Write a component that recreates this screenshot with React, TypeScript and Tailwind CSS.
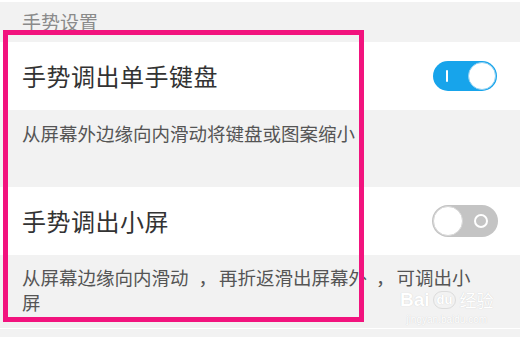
import React from 'react';

const font = { fontFamily: '"Noto Sans CJK SC", "Noto Sans", sans-serif' };

const ToggleOn = () => (
  <div className="relative w-[64px] h-[30px] rounded-full bg-[#17a4eb] flex items-center">
    <div className="ml-[13px] w-[2px] h-[12px] bg-white rounded-sm" />
    <div className="absolute right-[1px] top-[1px] w-[28px] h-[28px] rounded-full bg-white border border-[#8fd0f2]" />
  </div>
);

const ToggleOff = () => (
  <div className="relative w-[66px] h-[32px] rounded-full bg-[#c4c4c4] flex items-center justify-end">
    <div className="mr-[10px] w-[14px] h-[14px] rounded-full border-2 border-white bg-[#c4c4c4]" />
    <div className="absolute left-[1px] top-[1px] w-[30px] h-[30px] rounded-full bg-white border border-[#d6d6d6]" />
  </div>
);

export default function App() {
  return (
    <div className="relative w-[520px] h-[337px] overflow-hidden bg-[#f2f2f2]" style={font}>
      <div className="h-[2px] bg-white" />
      {/* header */}
      <div className="h-[40px] pl-[22px] pt-[7px] text-[19px] leading-[26px] text-[#8a8a8a]">手势设置</div>

      {/* row 1 */}
      <div className="h-[68px] bg-white flex items-center justify-between pl-[22px] pr-[23px]">
        <span className="text-[24px] text-[#333] tracking-[0.5px]">手势调出单手键盘</span>
        <ToggleOn />
      </div>
      <div className="h-[77px] pl-[22px] pt-[11px] text-[18.5px] leading-[25px] text-[#555]">
        从屏幕外边缘向内滑动将键盘或图案缩小
      </div>

      {/* row 2 */}
      <div className="h-[68px] bg-white flex items-center justify-between pl-[22px] pr-[22px]">
        <span className="text-[24px] text-[#333] tracking-[0.5px]">手势调出小屏</span>
        <ToggleOff />
      </div>
      <div className="h-[73px] pl-[22px] pt-[10px] text-[18.5px] leading-[25px] text-[#555] whitespace-nowrap">
        从屏幕边缘向内滑动<span className="ml-[10px] mr-[2px]">，</span>再折返滑出屏幕外<span className="ml-[9px] mr-[2px]">，</span>可调出小
        <br />
        屏
      </div>
      <div className="h-[1px] bg-white" />

      {/* watermark */}
      <div className="absolute left-[400px] top-[291px] flex flex-col items-center gap-[5px] text-white" style={{ textShadow: '0 0 1px #c8c8c8' }}>
        <div className="flex items-center gap-[3px] h-[18px]" style={{ fontFamily: '"Liberation Sans", sans-serif' }}>
          <span className="text-[19px] font-bold leading-[18px]">Bai</span>
          <span className="rounded-full border border-[#dcdcdc] px-[3px] text-[13px] font-bold leading-[16px]">du</span>
          <span className="text-[17px] leading-[18px]" style={font}>经验</span>
        </div>
        <div className="text-[10px] leading-[11px]" style={{ fontFamily: '"Liberation Sans", sans-serif' }}>jingyan.baidu.com</div>
      </div>

      {/* pink annotation box */}
      <div className="absolute left-[3px] top-[30px] w-[361px] h-[292px] border-[5px] border-[#f2137e]" />
    </div>
  );
}
